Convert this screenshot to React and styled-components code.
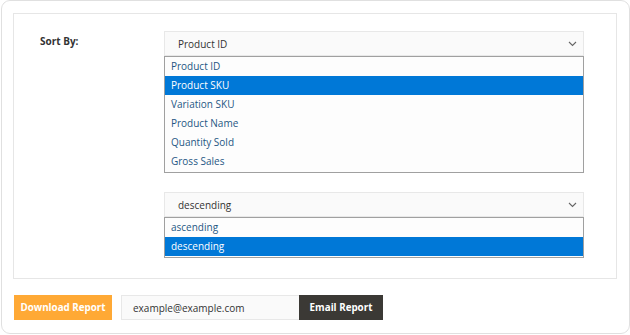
import styled, { createGlobalStyle } from "styled-components";

const GlobalStyle = createGlobalStyle`
  body {
    margin: 0;
    background: #fff;
    font-family: "Open Sans", "Liberation Sans", sans-serif;
    font-size: 10px;
    color: #333;
  }
`;

const sortOptions = ["Product ID", "Product SKU", "Variation SKU", "Product Name", "Quantity Sold", "Gross Sales"];
const orderOptions = ["ascending", "descending"];

function App() {
  return (
    <>
      <GlobalStyle />
      <Card>
        <Panel>
          <Label>Sort By:</Label>
          <Fields>
            <SelectGroup>
              <SelectBox>
                Product ID
                <Chevron />
              </SelectBox>
              <List>
                {sortOptions.map((opt) => (
                  <Item key={opt} selected={opt === "Product SKU"}>{opt}</Item>
                ))}
              </List>
            </SelectGroup>
            <SelectGroup>
              <SelectBox>
                descending
                <Chevron />
              </SelectBox>
              <List>
                {orderOptions.map((opt) => (
                  <Item key={opt} selected={opt === "descending"}>{opt}</Item>
                ))}
              </List>
            </SelectGroup>
          </Fields>
        </Panel>
        <Actions>
          <Button bg="#ffa935" w="98px">Download Report</Button>
          <EmailInput>example@example.com</EmailInput>
          <Button bg="#3b3935" w="84px">Email Report</Button>
        </Actions>
      </Card>
    </>
  );
}

function Chevron() {
  return (
    <ChevronSvg width="9" height="6" viewBox="0 0 9 6">
      <path d="M1 1 L4.5 4.5 L8 1" fill="none" stroke="#666" strokeWidth="1.1" />
    </ChevronSvg>
  );
}

const Card = styled.div`
  box-sizing: border-box;
  width: 629px;
  height: 334px;
  margin: 0 0 0 1px;
  border: 1px solid #e0e0e0;
  border-radius: 9px;
  padding: 12px 12px 0 11px;
`;

const Panel = styled.div`
  box-sizing: border-box;
  width: 604px;
  height: 266px;
  border: 1px solid #e6e6e6;
  display: flex;
  padding: 17px 0 0 26px;
`;

const Label = styled.div`
  width: 124px;
  font-weight: 700;
  font-size: 10px;
  color: #333;
  padding-top: 3px;
`;

const Fields = styled.div`
  display: flex;
  flex-direction: column;
  gap: 19px;
`;

const SelectGroup = styled.div`
  width: 420px;
`;

const SelectBox = styled.div`
  box-sizing: border-box;
  height: 25px;
  background: #fafafa;
  border: 1px solid #e8e8e8;
  padding: 0 0 0 13px;
  display: flex;
  align-items: center;
  justify-content: space-between;
  color: #333;
`;

const ChevronSvg = styled.svg`
  margin-right: 6px;
`;

const List = styled.div`
  border: 1px solid #a0a0a0;
  background: #fdfdfd;
  padding-bottom: 1px;
`;

const Item = styled.div`
  height: 19px;
  line-height: 19px;
  padding-left: 6px;
  color: ${(p) => (p.selected ? "#fff" : "#1f5784")};
  background: ${(p) => (p.selected ? "#0078d7" : "transparent")};
`;

const Actions = styled.div`
  display: flex;
  align-items: center;
  padding: 16px 0 0 1px;
`;

const Button = styled.div`
  width: ${(p) => p.w};
  height: 25px;
  display: flex;
  align-items: center;
  justify-content: center;
  background: ${(p) => p.bg};
  color: #fff;
  font-weight: 700;
  font-size: 9.8px;
`;

const EmailInput = styled.div`
  box-sizing: border-box;
  width: 178px;
  height: 25px;
  margin-left: 9px;
  background: #fafafa;
  border: 1px solid #e8e8e8;
  border-right: none;
  display: flex;
  align-items: center;
  padding-left: 11px;
  color: #333;
`;

export default App;
